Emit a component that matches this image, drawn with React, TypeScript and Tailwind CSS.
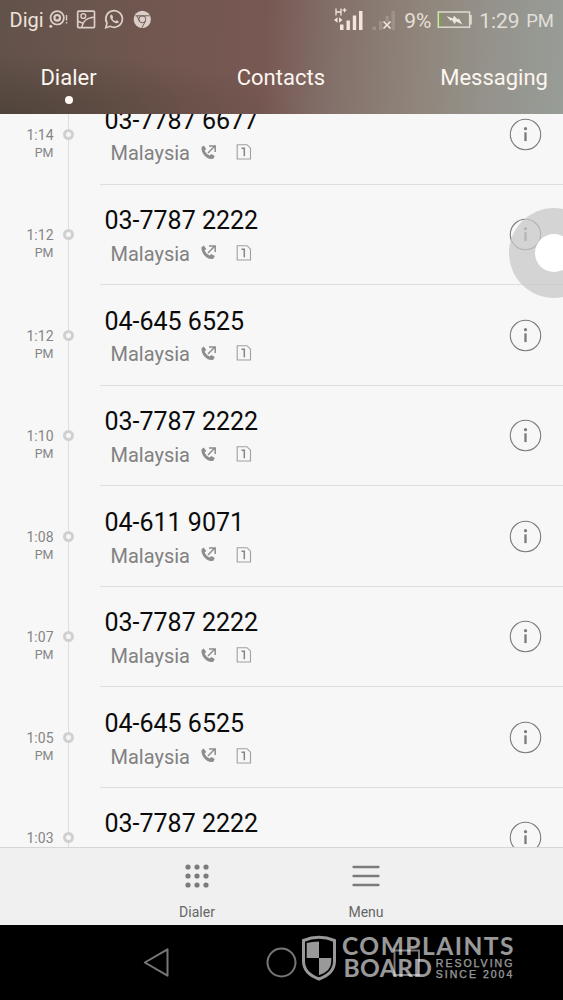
import React from 'react';

const calls = [
  { number: '03-7787 6677', time: '1:14' },
  { number: '03-7787 2222', time: '1:12' },
  { number: '04-645 6525', time: '1:12' },
  { number: '03-7787 2222', time: '1:10' },
  { number: '04-611 9071', time: '1:08' },
  { number: '03-7787 2222', time: '1:07' },
  { number: '04-645 6525', time: '1:05' },
  { number: '03-7787 2222', time: '1:03' },
];

const StatusBar = () => (
  <div className="flex h-10 items-center justify-between text-[#eee3dd]">
    <div className="flex items-center pl-[9.5px]">
      <span className="w-[36.5px] text-xl leading-6">Digi</span>
      {/* Notification icons */}
      <svg width="108" height="24" viewBox="46 8 108 24" fill="none" stroke="#dccfca" strokeWidth="1.7">
        <circle cx="57.2" cy="17.8" r="6.7" />
        <circle cx="57.2" cy="17.8" r="2.8" strokeWidth="2.2" />
        <circle cx="50.8" cy="26.3" r="1.5" fill="#dccfca" stroke="none" />
        <path d="M66.5 15v5.5M66.5 22v1.5" strokeWidth="1.4" />
        <rect x="77.7" y="11.2" width="16.8" height="16.4" rx="1" />
        <circle cx="83.3" cy="16" r="2.4" strokeWidth="1.4" />
        <path d="M78 21.2l5 2M81.7 27.5c.8-5.5 5-10 12.5-10.2" strokeWidth="1.5" />
        <path d="M105.8 27.7l1.2-4.4a8.3 8.3 0 1 1 3.2 3z" />
        <path d="M111.1 14.8c-1.9 1.2-.8 4.3 1.5 6.4 2.2 2 4.7 2.9 5.9 1.4l.3-1-2.4-1.4-1.2 1.1c-1.2-.4-2.2-1.3-2.8-2.5l.8-1.2-1.1-2.8z" fill="#dccfca" stroke="none" />
        <circle cx="142.3" cy="19.3" r="8.6" fill="#dccfca" stroke="none" />
        <circle cx="142.3" cy="19.3" r="3.5" stroke="#745c55" strokeWidth="1" />
        <path d="M135.5 15.8h14M139.5 21.1l-2.5-5M145.5 21.1l-3.5 6.5" stroke="#745c55" strokeWidth="1" />
      </svg>
    </div>
    <div className="flex items-center pr-[9px]">
      {/* Mobile signal */}
      <svg width="66" height="28" viewBox="332 5 66 28" fill="#f3e5dd">
        <path d="M335 7.5v7M340 7.5v7M335 11h5M341.5 9.2h4M343.5 7.2v4" stroke="#f3e5dd" strokeWidth="1.3" />
        <path d="M333 19l3.5-2.8v5.6zM341.5 19l-3.5-2.8v5.6z" />
        <rect x="339" y="23.5" width="3.5" height="5.5" />
        <rect x="345.5" y="19.5" width="3.4" height="9.5" />
        <rect x="351.8" y="14.5" width="3.4" height="14.5" />
        <rect x="358" y="10" width="3.5" height="19" />
        <g fill="#9d918b">
          <rect x="371.5" y="25.5" width="3.5" height="3.5" />
          <rect x="378" y="20" width="3.5" height="9" />
          <rect x="384.5" y="15" width="3.4" height="6" />
          <rect x="390.5" y="10" width="3.5" height="19" />
        </g>
        <path d="M382.5 20.5l7 7M389.5 20.5l-7 7" stroke="#f3e5dd" strokeWidth="1.7" />
      </svg>
      <span className="w-[36.5px] pt-[1px] pl-[5px] text-[21px] leading-6 text-[#e5dfd8]">9%</span>
      <svg width="36" height="20" viewBox="434 10 36 20" className="mr-[7.5px]">
        <rect x="436.3" y="12" width="31.3" height="15.2" fill="none" stroke="#dedacb" strokeWidth="1.5" />
        <rect x="437.3" y="13" width="2.5" height="13.2" fill="#7fa04a" />
        <path d="M468 15h1.8v9.5H468z" fill="#dedacb" />
        <path d="M444.5 16l6.3 2.5 1.2-2.8 3.5 3.6 1.4-.9 3.6 6.1-6.5-3-1.3 2.7-2.7-4.1-1.5.6z" fill="#ece9dd" />
      </svg>
      <span className="pt-[1px] text-[21px] leading-6 text-[#e1dfda]">1:29</span>
      <span className="ml-[6.5px] pt-[2px] text-[18.5px] leading-6 text-[#e1dfda]">PM</span>
    </div>
  </div>
);

const Header = () => (
  <header className="h-[114px] bg-[linear-gradient(94deg,#62524a_0%,#6c564e_18%,#745751_34%,#785853_47%,#83706a_59%,#8f8479_73%,#94918a_85%,#989d97_100%)]">
    <div className="h-full bg-[radial-gradient(ellipse_at_bottom_left,#3d352a80_0%,#3d352a00_38%)]">
      <StatusBar />
      <nav className="flex justify-between pt-[25px] pr-[15px] pl-[40.5px] text-[22px] leading-[26px] text-[#fdf6f0]">
        <div className="flex w-[56px] flex-col items-center">
          <span>Dialer</span>
          <span className="mt-[5px] size-2 rounded-full bg-[#fff8f3]"></span>
        </div>
        <span className="ml-[25px]">Contacts</span>
        <span>Messaging</span>
      </nav>
    </div>
  </header>
);

const CallRow = ({ number, time }: { number: string; time: string }) => (
  <div className="flex h-[100.55px] shrink-0">
    <div className="w-[53.5px] pt-[41.5px] text-right text-[#858585]">
      <div className="text-sm leading-[18px]">{time}</div>
      <div className="text-[12.5px] leading-[18px]">PM</div>
    </div>
    {/* Timeline with its marker */}
    <div className="flex w-[30px] flex-col items-center">
      <div className="h-[44.5px] w-px bg-[#dedede]"></div>
      <div className="size-[11px] shrink-0 rounded-full border-[3px] border-[#d0d0d0] bg-[#f7f7f7]"></div>
      <div className="w-px flex-1 bg-[#dedede]"></div>
    </div>
    <div className="ml-[16.5px] flex flex-1 justify-between border-b border-[#dedede] pt-[21.5px] pr-[21px] pl-[4.5px]">
      <div>
        <div className="text-[25px] leading-[30px] text-[#0b0b0b]">{number}</div>
        <div className="mt-[5.9px] flex items-center pl-[6px] text-[#818181]">
          <span className="w-[89.5px] text-xl leading-6">Malaysia</span>
          <svg width="17" height="17" viewBox="0 0 17 17" fill="none" stroke="#8d8d8d" className="-mt-[2px]">
            <path d="M1.5 3.2l2.2-1.7 2.6 3.4-1.7 1.7c1 2.2 2.7 3.9 5 4.9l1.7-1.6 3.5 2.2-1.5 2.6c-5.5 2-12.5-5-11.8-11.5z" fill="#8d8d8d" stroke="none" />
            <path d="M8 9l6.6-6.7M9 1.9h6.2v6" strokeWidth="1.5" />
          </svg>
          <svg width="16" height="18" viewBox="0 0 16 18" fill="none" stroke="#a0a0a0" className="-mt-[2px] ml-[19px]">
            <path d="M1.2 1.7h9.8l3.5 3.5v10.8H1.2z" strokeWidth="1.1" />
            <path d="M5.5 5.2h2.8v8" stroke="#858585" strokeWidth="1.5" />
          </svg>
        </div>
      </div>
      <svg width="33" height="33" viewBox="0 0 33 33" className="mt-[12px] shrink-0">
        <circle cx="16.5" cy="16.5" r="15.2" fill="none" stroke="#7b7b7b" strokeWidth="1.1" />
        <circle cx="16.5" cy="10.7" r="1.6" fill="#7b7b7b" />
        <path d="M16.5 14.3v8.8" stroke="#7b7b7b" strokeWidth="2.3" />
      </svg>
    </div>
  </div>
);

const BottomBar = () => (
  <div className="flex h-[78px] justify-center gap-[109px] border-t border-[#d6d6d6] bg-[#f0f0f0] text-sm leading-[18px] text-[#666]">
    <div className="flex w-[60px] flex-col items-center pt-[14.5px]">
      <svg width="26" height="26" viewBox="0 0 26 26" fill="#7b7b7b">
        {[4, 13, 22].map((y) => [4, 13, 22].map((x) => <circle key={`${x}-${y}`} cx={x} cy={y} r="2.6" />))}
      </svg>
      <span className="mt-[14.5px]">Dialer</span>
    </div>
    <div className="flex w-[60px] flex-col items-center pt-[14.5px]">
      <svg width="28" height="26" viewBox="0 0 28 26" stroke="#7b7b7b" strokeWidth="2.3" strokeLinecap="round">
        <path d="M1.5 4h25M1.5 13h25M1.5 22h25" />
      </svg>
      <span className="mt-[14.5px]">Menu</span>
    </div>
  </div>
);

const SystemNav = () => (
  <div className="relative h-[75px] bg-black">
    <svg width="563" height="75" viewBox="0 925 563 75" fill="none" stroke="#777" strokeWidth="2">
      <path d="M144.8 962.5l22.7-13.2v26.4z" strokeLinejoin="round" />
      <circle cx="281.5" cy="962.5" r="14" />
      <rect x="394.5" y="950.5" width="24.5" height="24.5" />
    </svg>
    {/* Translucent watermark, the nav buttons show through it */}
    <svg width="220" height="50" viewBox="300 932 220 50" className="absolute top-[7px] left-[300px] opacity-60" fill="#fff">
      <path d="M303.5 940.5q15.5-6.5 31 0v20.5q0 12.5-15.5 18q-15.5-5.5-15.5-18z" fill="none" stroke="#fff" strokeWidth="3" />
      <path d="M319 941.5v16.5h-12.3v-15q5-1.5 12.3-1.5zM319 958h12.3v3.5q0 9.5-12.3 13.8z" />
      <g fontFamily="Lato, sans-serif" fontWeight="700">
        <text x="342" y="955" fontSize="24.5" textLength="171.5">COMPLAINTS</text>
        <text x="343.5" y="977" fontSize="24.5" textLength="88.5">BOARD</text>
      </g>
      <g fontFamily="Liberation Sans, sans-serif" fontSize="10.5" stroke="#fff" strokeWidth=".25">
        <text x="435.8" y="966.5" textLength="76.5">RESOLVING</text>
        <text x="435.8" y="977.5" textLength="76.5">SINCE 2004</text>
      </g>
    </svg>
  </div>
);

const App = () => {
  return (
    <div className="relative flex h-[1000px] w-[563px] flex-col overflow-hidden bg-[#f7f7f7] font-[Roboto,sans-serif]">
      <Header />
      <main className="h-[733px] overflow-hidden">
        <div className="-mt-[30px] flex flex-col">
          {calls.map((call, i) => (
            <CallRow key={i} number={call.number} time={call.time} />
          ))}
        </div>
      </main>
      <BottomBar />
      <SystemNav />
      {/* Floating assistive button */}
      <div className="absolute top-[207.5px] left-[509px] flex size-[90px] items-center justify-center rounded-full bg-[#c8c8c8]/75">
        <div className="size-[38px] rounded-full bg-white"></div>
      </div>
    </div>
  );
};

export default App;
